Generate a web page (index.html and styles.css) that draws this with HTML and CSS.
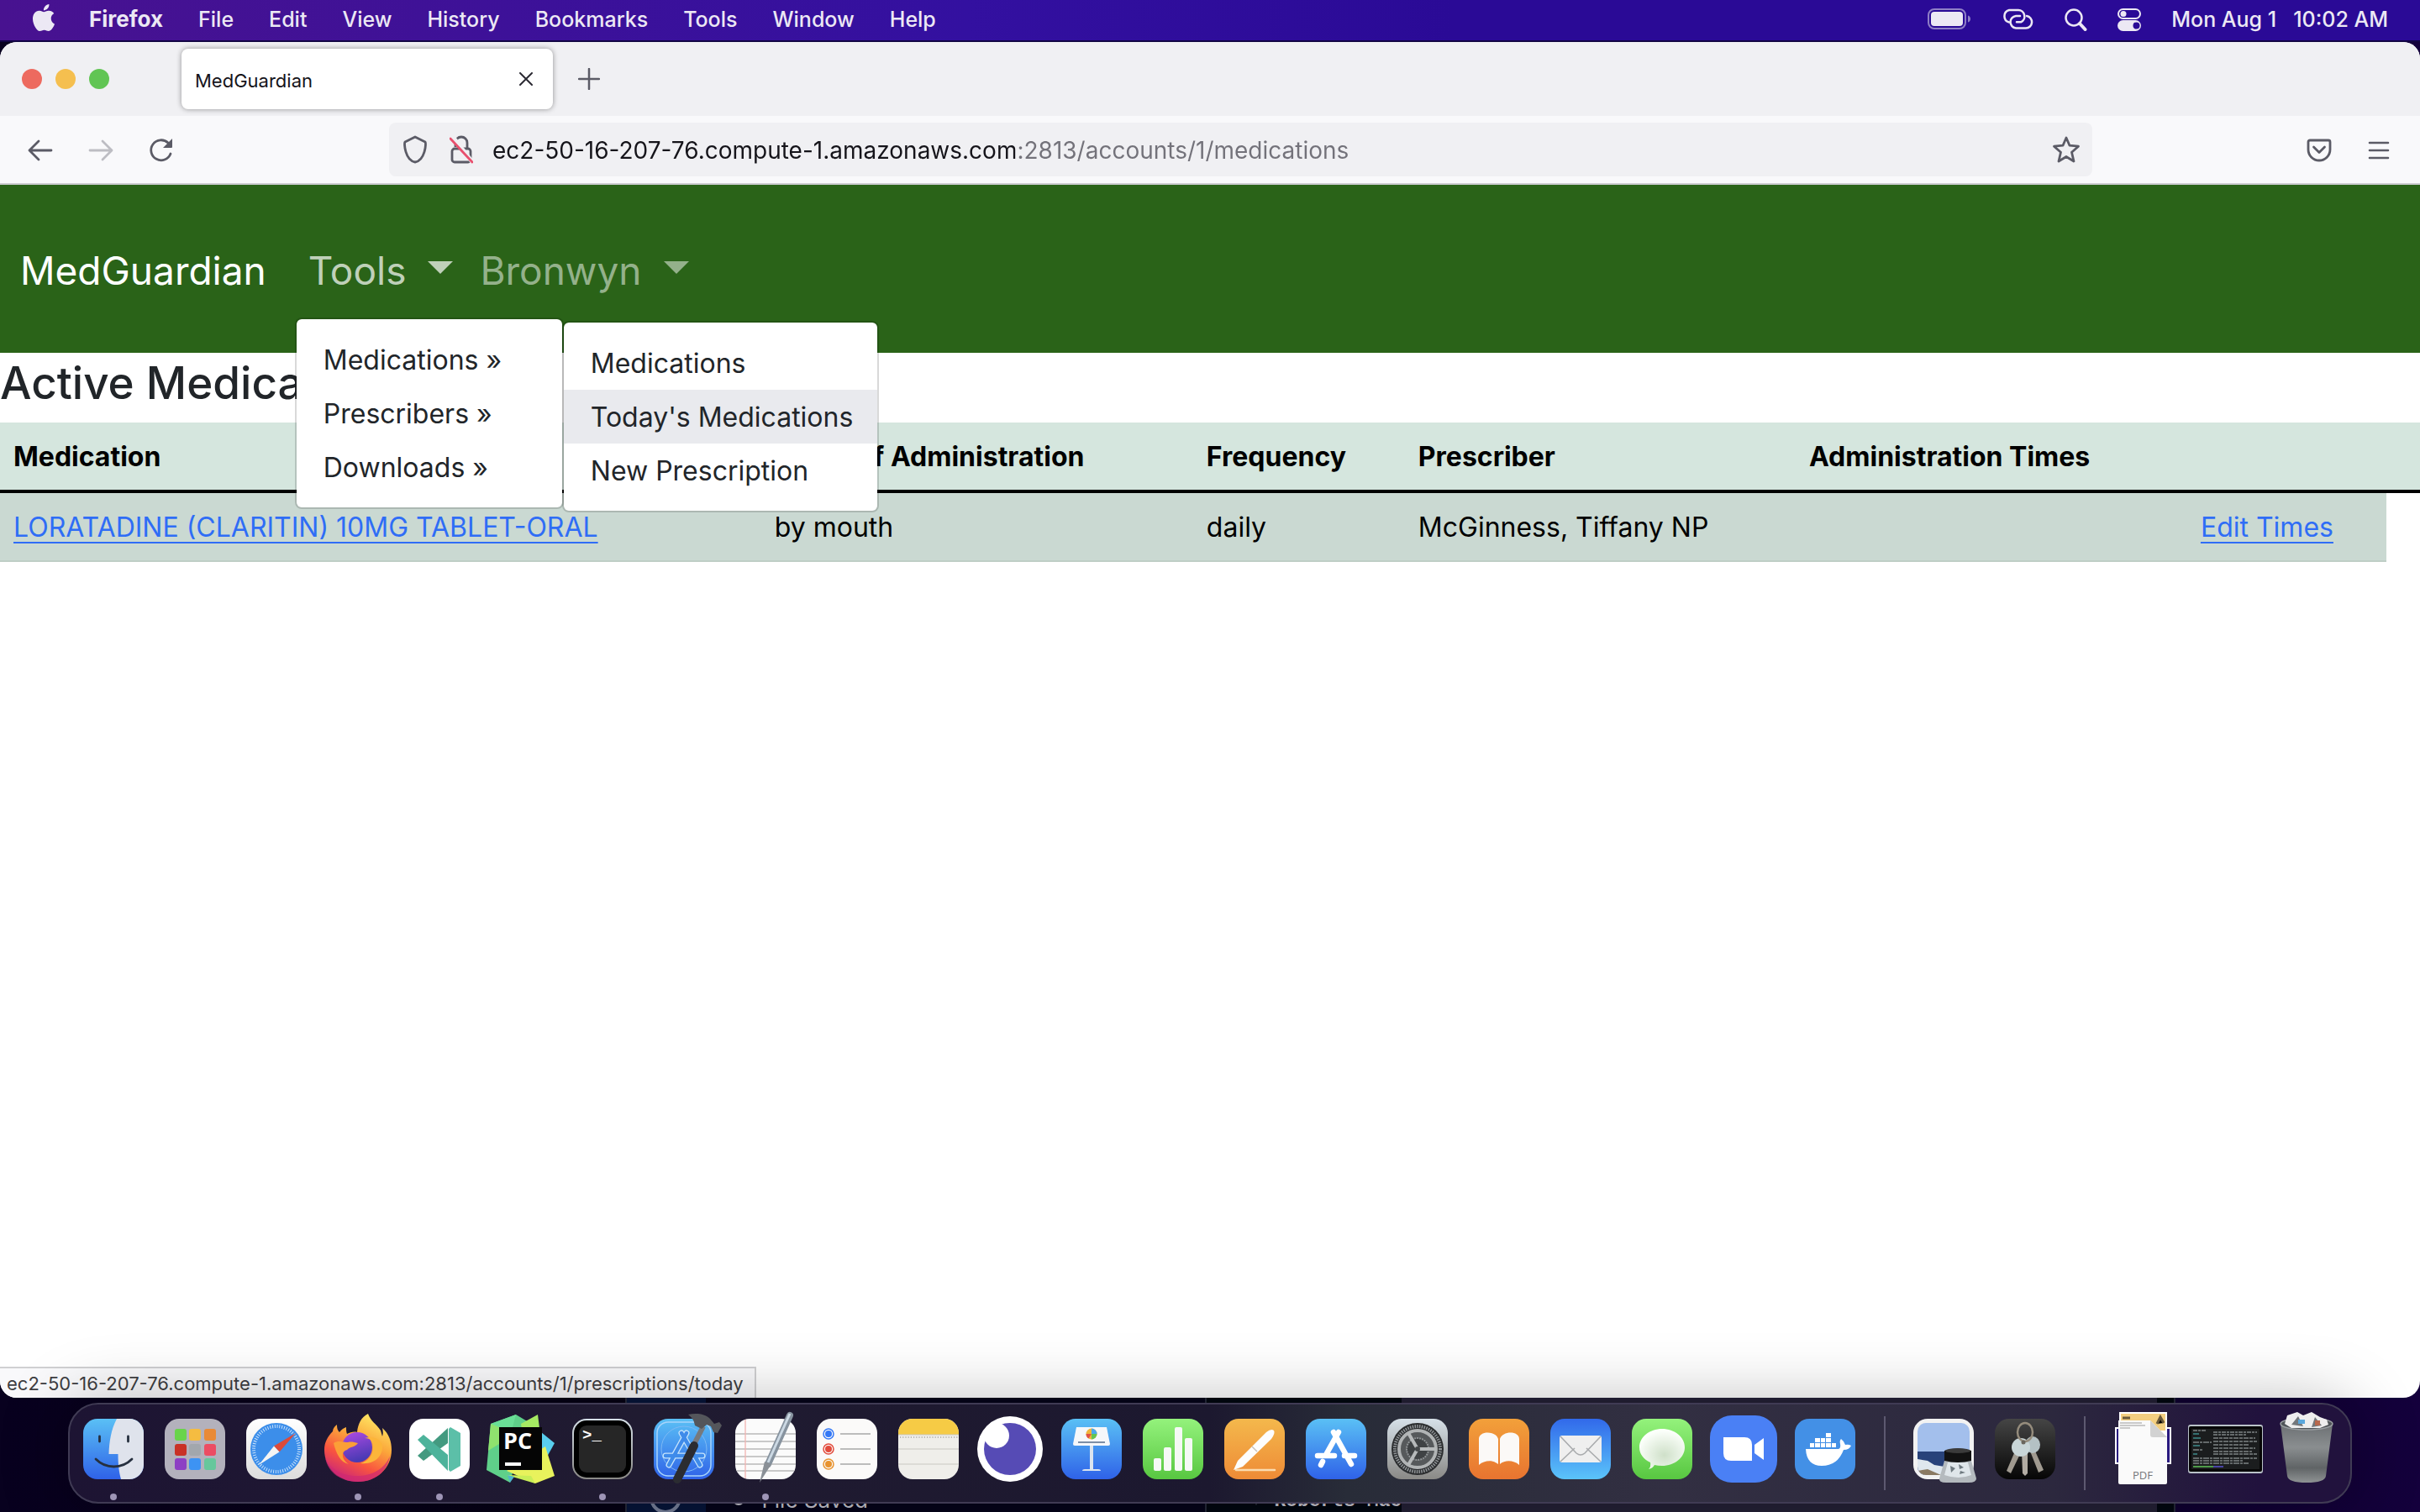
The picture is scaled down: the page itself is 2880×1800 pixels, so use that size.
FILE: index.html
```html
<!DOCTYPE html>
<html lang="en">
<head>
<meta charset="utf-8">
<title>MedGuardian</title>
<link rel="stylesheet" href="styles.css">
</head>
<body>
<div class="backdrop" aria-hidden="true">
  <div class="back-window editor">
    <div class="editor-rail"><svg viewBox="0 0 40 40" width="40" height="40"><circle cx="20" cy="20" r="17" fill="none" stroke="#77809a" stroke-width="4"/></svg></div>
    <div class="editor-body"><i class="bullet"></i><span>File Saved</span></div>
  </div>
  <div class="back-window shell">
    <div class="shell-pane"><i class="bullet dim"></i><span>Roberts-Mac</span></div>
    <div class="shell-side"></div>
  </div>
</div>

<header class="menubar">
  <svg class="apple" viewBox="0 0 24 24" width="32" height="32" fill="#ece8f4"><path d="M12.152 6.896c-.948 0-2.415-1.078-3.96-1.04-2.04.027-3.91 1.183-4.961 3.014-2.117 3.675-.546 9.103 1.519 12.09 1.013 1.454 2.208 3.09 3.792 3.039 1.52-.065 2.09-.987 3.935-.987 1.831 0 2.35.987 3.96.948 1.637-.026 2.676-1.48 3.676-2.948 1.156-1.688 1.636-3.325 1.662-3.415-.039-.013-3.182-1.221-3.22-4.857-.026-3.04 2.48-4.494 2.597-4.559-1.429-2.09-3.623-2.324-4.39-2.376-2-.156-3.675 1.09-4.61 1.09zM15.53 3.83c.843-1.012 1.4-2.427 1.245-3.83-1.207.052-2.662.805-3.532 1.818-.78.896-1.454 2.338-1.273 3.714 1.338.104 2.715-.688 3.559-1.701"/></svg>
  <nav class="menus">
    <button class="app-name">Firefox</button><button>File</button><button>Edit</button><button>View</button><button>History</button><button>Bookmarks</button><button>Tools</button><button>Window</button><button>Help</button>
  </nav>
  <div class="status">
    <svg viewBox="0 0 52 26" width="52" height="26"><rect x="1" y="1" width="44" height="23" rx="7" fill="none" stroke="#8f7fc6" stroke-width="2"/><rect x="4" y="4" width="38" height="17" rx="4" fill="#ece8f4"/><path d="M48 8.500c4 1 4 7 0 8z" fill="#8f7fc6"/></svg>
    <svg viewBox="0 0 38 26" width="38" height="26" fill="none" stroke="#ece8f4" stroke-width="2.500" stroke-linecap="round"><path d="M9 16.500A7.500 7.500 0 0 1 9 2h11a7.500 7.500 0 0 1 3 14.300h-5"/><path d="M22 9h-5a7.300 7.300 0 0 0 0 14.500h12A7.300 7.300 0 0 0 30 9"/></svg>
    <svg viewBox="0 0 28 28" width="28" height="28" fill="none" stroke="#ece8f4" stroke-linecap="round"><circle cx="12" cy="12" r="9.500" stroke-width="2.500"/><path d="M19 19l6.500 7" stroke-width="4"/></svg>
    <svg viewBox="0 0 28 28" width="28" height="28"><rect x="1" y="2" width="26" height="11" rx="5.500" fill="none" stroke="#ece8f4" stroke-width="2"/><circle cx="7" cy="7.500" r="3.500" fill="#ece8f4"/><rect y="15" width="28" height="13" rx="6.500" fill="#ece8f4"/><circle cx="22.500" cy="21.500" r="4" fill="#2a0a96"/></svg>
    <div class="clock"><span>Mon Aug 1</span><span>10:02 AM</span></div>
  </div>
</header>

<main class="window">
  <div class="tabstrip">
    <div class="lights"><button class="close" aria-label="Close"></button><button class="minimise" aria-label="Minimise"></button><button class="zoom" aria-label="Zoom"></button></div>
    <div class="tab"><span>MedGuardian</span><button aria-label="Close tab"><svg viewBox="0 0 16 16" width="16" height="16"><path d="M1 1l14 14M15 1L1 15" stroke="#2b2a33" stroke-width="2" stroke-linecap="round"/></svg></button></div>
    <button class="new-tab" aria-label="New tab"><svg viewBox="0 0 26 26" width="26" height="26"><path d="M13 1v24M1 13h24" stroke="#5b5b66" stroke-width="2.500" stroke-linecap="round"/></svg></button>
  </div>
  <div class="toolbar">
    <div class="history">
      <button aria-label="Back"><svg viewBox="0 0 30 26" width="30" height="26"><path d="M2 13h26M13 2L2 13l11 11" fill="none" stroke="#5b5b66" stroke-width="2.800" stroke-linecap="round" stroke-linejoin="round"/></svg></button>
      <button aria-label="Forward" disabled><svg viewBox="0 0 30 26" width="30" height="26"><path d="M28 13H2M17 2l11 11-11 11" fill="none" stroke="#bdbdc3" stroke-width="2.800" stroke-linecap="round" stroke-linejoin="round"/></svg></button>
      <button aria-label="Reload"><svg viewBox="0 0 30 30" width="30" height="30"><path d="M26 19a12 12 0 1 1-3-13l3 3" fill="none" stroke="#5b5b66" stroke-width="2.800" stroke-linecap="round"/><path d="M28 1v10a1 1 0 0 1-1 1H17z" fill="#5b5b66"/></svg></button>
    </div>
    <div class="urlbar">
      <svg viewBox="0 0 30 34" width="30" height="34"><path d="M15 2L3 8c-1.500 1 0 22 12 24C27 30 28.500 9 27 8z" fill="none" stroke="#5b5b66" stroke-width="2.800" stroke-linejoin="round"/></svg>
      <svg viewBox="0 0 28 34" width="28" height="34"><path d="M7 14V9a7 7 0 0 1 14 0v7" fill="none" stroke="#5b5b66" stroke-width="2.800"/><rect x="3" y="16" width="22" height="16" rx="3" fill="none" stroke="#5b5b66" stroke-width="2.800"/><path d="M4 2l24 31" stroke="#f0f0f3" stroke-width="5"/><path d="M1 4l26 28" stroke="#e8506e" stroke-width="2.800" stroke-linecap="round"/></svg>
      <input type="text" aria-label="Address" value="ec2-50-16-207-76.compute-1.amazonaws.com:2813/accounts/1/medications">
      <svg viewBox="0 0 34 34" width="34" height="34"><path d="M17 3l4 9.200 10.500 1-8 7L26 31l-9-5.500L8 31l2.500-10.800-8-7 10.500-1z" fill="none" stroke="#5b5b66" stroke-width="2.800" stroke-linejoin="round"/></svg>
    </div>
    <div class="actions">
      <button aria-label="Save to Pocket"><svg viewBox="0 0 30 28" width="30" height="28" fill="none" stroke="#5b5b66" stroke-width="2.800" stroke-linecap="round" stroke-linejoin="round"><path d="M4 2h22a2 2 0 0 1 2 2v9a13 13 0 0 1-26 0V4a2 2 0 0 1 2-2z"/><path d="M8.500 10l6.500 6.500 6.500-6.500"/></svg></button>
      <button aria-label="Menu"><svg viewBox="0 0 26 22" width="26" height="22"><path d="M2 2h22M2 11h22M2 20h22" stroke="#5b5b66" stroke-width="2.600" stroke-linecap="round"/></svg></button>
    </div>
  </div>

  <div class="page">
    <nav class="navbar">
      <a class="brand" href="#">MedGuardian</a>
      <div class="nav-item">
        <button class="nav-link open">Tools<i class="caret"></i></button>
        <ul class="dropdown">
          <li><a href="#">Medications »</a>
            <ul class="dropdown submenu">
              <li><a href="#">Medications</a></li>
              <li><a class="active" href="#">Today's Medications</a></li>
              <li><a href="#">New Prescription</a></li>
            </ul>
          </li>
          <li><a href="#">Prescribers »</a></li>
          <li><a href="#">Downloads »</a></li>
        </ul>
      </div>
      <div class="nav-item"><button class="nav-link">Bronwyn<i class="caret"></i></button></div>
    </nav>
    <h2>Active Medications</h2>
    <table>
      <colgroup><col class="c-name"><col class="c-route"><col class="c-freq"><col class="c-prescriber"><col class="c-times"><col class="c-edit"><col></colgroup>
      <thead><tr><th>Medication</th><th>Route of Administration</th><th>Frequency</th><th>Prescriber</th><th>Administration Times</th><th></th><th></th></tr></thead>
      <tbody><tr><td><a href="#">LORATADINE (CLARITIN) 10MG TABLET-ORAL</a></td><td>by mouth</td><td>daily</td><td>McGinness, Tiffany NP</td><td></td><td><a href="#">Edit Times</a></td></tr></tbody>
    </table>
  </div>
  <div class="link-status">ec2-50-16-207-76.compute-1.amazonaws.com:2813/accounts/1/prescriptions/today</div>
</main>

<footer class="dock">
  <svg class="defs" width="0" height="0"><defs>
    <linearGradient id="blue" x2="0" y2="1"><stop stop-color="#5ac0f5"/><stop offset="1" stop-color="#2f62e8"/></linearGradient>
    <linearGradient id="mailblue" x2="0" y2="1"><stop stop-color="#3169ea"/><stop offset="1" stop-color="#5bc4fa"/></linearGradient>
    <linearGradient id="green" x2="0" y2="1"><stop stop-color="#94f27c"/><stop offset="1" stop-color="#58c741"/></linearGradient>
    <linearGradient id="orange" x2="0" y2="1"><stop stop-color="#f4b84c"/><stop offset="1" stop-color="#ee8b36"/></linearGradient>
    <linearGradient id="book" x2="0" y2="1"><stop stop-color="#f2a03a"/><stop offset="1" stop-color="#e87430"/></linearGradient>
    <linearGradient id="white" x2="0" y2="1"><stop stop-color="#fff"/><stop offset="1" stop-color="#dcdcdc"/></linearGradient>
    <linearGradient id="steel" x2="0" y2="1"><stop stop-color="#d6e0e8"/><stop offset="1" stop-color="#8a8986"/></linearGradient>
    <linearGradient id="bin" x2="0" y2="1"><stop stop-color="#6c7073"/><stop offset=".4" stop-color="#8a8e90"/><stop offset=".75" stop-color="#606466"/><stop offset="1" stop-color="#8f9394"/></linearGradient>
    <linearGradient id="black" x2="0" y2="1"><stop stop-color="#454545"/><stop offset="1" stop-color="#060606"/></linearGradient>
    <linearGradient id="flame" x1=".8" y1="0" x2=".3" y2="1"><stop stop-color="#fff06a"/><stop offset=".4" stop-color="#fba63a"/><stop offset=".7" stop-color="#f9553f"/><stop offset="1" stop-color="#c8237c"/></linearGradient>
    <linearGradient id="globe" x2=".3" y2="1"><stop stop-color="#b04ae4"/><stop offset="1" stop-color="#4a3ab4"/></linearGradient>
    <radialGradient id="bubble" cx=".55" cy=".65" r=".6"><stop stop-color="#cfe0c9"/><stop offset="1" stop-color="#fbfffa"/></radialGradient>
  </defs></svg>

  <button class="slot running" aria-label="Finder"><svg viewBox="0 0 96 96"><clipPath id="fc"><rect x="12" y="12" width="72" height="72" rx="17"/></clipPath><g clip-path="url(#fc)"><rect x="12" y="12" width="72" height="72" fill="url(#blue)"/><path d="M52 12C45 25 43 40 42.500 54h11c0 12 1 21 3.500 30h30V12z" fill="#dfe3ec"/></g><path d="M31.500 33v6M65.500 33v6M27 60c12 12 31 12 43 0" fill="none" stroke="#26303f" stroke-width="2.800" stroke-linecap="round"/></svg></button>
  <button class="slot" aria-label="Launchpad"><svg viewBox="0 0 96 96"><rect x="12" y="12" width="72" height="72" rx="17" fill="#b3b1bc"/><g><rect x="24" y="24" width="14" height="14" rx="3" fill="#69d44b"/><rect x="41" y="24" width="14" height="14" rx="3" fill="#f5bc41"/><rect x="59" y="24" width="14" height="14" rx="3" fill="#e98a36"/><rect x="24" y="42" width="14" height="14" rx="3" fill="#c93126"/><rect x="41" y="42" width="14" height="14" rx="3" fill="#a2a7ad"/><rect x="59" y="42" width="14" height="14" rx="3" fill="#ec4c63"/><rect x="24" y="59" width="14" height="14" rx="3" fill="#8d3fc4"/><rect x="41" y="59" width="14" height="14" rx="3" fill="#3d93f3"/><rect x="59" y="59" width="14" height="14" rx="3" fill="#66c79c"/></g></svg></button>
  <button class="slot" aria-label="Safari"><svg viewBox="0 0 96 96"><rect x="12" y="12" width="72" height="72" rx="17" fill="url(#white)"/><circle cx="48" cy="48" r="31" fill="#3c8eea"/><circle cx="48" cy="48" r="27" fill="none" stroke="#c9e2fb" stroke-width="4" stroke-dasharray="1 1.830"/><path d="M71 29L45 44.500l6.500 7z" fill="#dc4a3a"/><path d="M27 67l18-22.500 6.500 7z" fill="#f4f4f4"/></svg></button>
  <button class="slot running" aria-label="Firefox"><svg viewBox="0 0 96 96"><path d="M60 6c3 9 10 12 15 20l2 7c1-3 1-6 0-10 8 7 11 16 11 26 0 22-18 38-40 38S8 71 8 49c0-9 4-16 10-22 0-3 2-6 5-8 0 5 1 7 3 9 2-3 5-5 8-6 0 3 0 6 1 8 4-2 8-3 12-2 1-10 5-18 13-22z" fill="url(#flame)"/><path d="M9 58c6 15 21 22 38 22s33-8 39-24c-3 20-19 31-38 31S12 77 9 58z" fill="#cf2a72" opacity=".7"/><circle cx="47" cy="46" r="18" fill="url(#globe)"/><path d="M19 41c5-4 12-1 17-1 4-1 8 0 12 1-3 5-10 4-13 8-8 2-6 12 2 17-10-2-15-13-18-25z" fill="#fb9f37"/><path d="M56 35c8 0 11 5 10 11 0 10-7 17-15 19 17 2 27-9 26-21-2-9-12-12-21-9z" fill="#fcb53a"/></svg></button>
  <button class="slot running" aria-label="Code"><svg viewBox="0 0 96 96"><rect x="12" y="12" width="72" height="72" rx="17" fill="#fff"/><path d="M22 56L58 23v18L29 62z" fill="#439a80"/><path d="M22 37l7-6 29 24v19z" fill="#4db39b"/><path d="M59 24l2-2 12 7v39l-12 7-2-2z" fill="#5cbfa8"/></svg></button>
  <button class="slot" aria-label="PyCharm"><svg viewBox="0 0 96 96"><path d="M12 18L42 7l20 12-20 42-7 27L7 73z" fill="#5fd08a"/><path d="M12 18L42 7l-8 30z" fill="#6adf97"/><path d="M12 18l10 4v20L9 50z" fill="#8fe26e"/><path d="M48 18L68 7l3 24-20 8z" fill="#a6ea63"/><path d="M72 28l16 13-10 18-14 5z" fill="#59ceee"/><path d="M31 74l46-29 11 35-23 9z" fill="#e8f25c"/><path d="M31 79l34 10-5-9z" fill="#c9ee58"/><path d="M35 88l5-7-8-2z" fill="#4fb6c9"/><rect x="22" y="22" width="51" height="51" fill="#050505"/><text x="27" y="48" class="pc">PC</text><rect x="29" y="64" width="19" height="4" fill="#fff"/></svg></button>
  <button class="slot running" aria-label="Terminal"><svg viewBox="0 0 96 96"><rect x="12" y="12" width="72" height="72" rx="17" fill="url(#steel)"/><rect x="14" y="14" width="68" height="68" rx="15" fill="#000"/><rect x="20" y="20" width="56" height="56" rx="9" fill="#262626"/><text x="24" y="37" class="prompt">&gt;_</text></svg></button>
  <button class="slot" aria-label="Xcode"><svg viewBox="0 0 96 96"><rect x="12" y="12" width="72" height="72" rx="17" fill="url(#blue)"/><rect x="16" y="16" width="64" height="64" rx="13" fill="none" stroke="#a8d4fa" stroke-width="1.500"/><circle cx="48" cy="48" r="27" fill="none" stroke="#7db9f4"/><g fill="none" stroke="#c6e4fc" stroke-width="7" stroke-linecap="round"><path d="M51 29L30 67M45 29l22 38M26 56h44"/></g><g fill="none" stroke="#3f8bea" stroke-width="4.500" stroke-linecap="round"><path d="M51 29L30 67M45 29l22 38M26 56h44"/></g><path d="M71 21L56 50" stroke="#77797d" stroke-width="6"/><path d="M60 44L40 84" stroke="#2b2c31" stroke-width="10" stroke-linecap="round"/><path d="M53 7c10-2 20-1 26 5l5 6 6-2 3 4-5 9-5-1-3-7-5-2-6 5-8-4c-1-6-3-9-8-13z" fill="#54565b"/></svg></button>
  <button class="slot running" aria-label="TextEdit"><svg viewBox="0 0 96 96"><rect x="12" y="12" width="72" height="72" rx="17" fill="#fbfbfb"/><path d="M12 30h72M12 39h72M12 48h72M12 57h72M12 66h72M14 74h68" stroke="#b9b9b9" stroke-width="1.300"/><path d="M24 13v70" stroke="#f2b3b0" stroke-width="1.300"/><path d="M77 8L51 66" stroke="#87939f" stroke-width="8" stroke-linecap="round"/><path d="M77 6L51 64" stroke="#ccd9e4" stroke-width="3"/><path d="M47 63l8 3-14 22z" fill="#8a9097"/></svg></button>
  <button class="slot" aria-label="Reminders"><svg viewBox="0 0 96 96"><rect x="12" y="12" width="72" height="72" rx="17" fill="#fbfaf9"/><path d="M40 30h36M40 48h36M40 66h36" stroke="#bcbcbc" stroke-width="1.800"/><g fill="none" stroke-width="1.500"><circle cx="26" cy="30" r="6" stroke="#3478f6"/><circle cx="26" cy="48" r="6" stroke="#e24b3c"/><circle cx="26" cy="66" r="6" stroke="#e8932f"/></g><circle cx="26" cy="30" r="4" fill="#3478f6"/><circle cx="26" cy="48" r="4" fill="#e24b3c"/><circle cx="26" cy="66" r="4" fill="#e8932f"/></svg></button>
  <button class="slot" aria-label="Notes"><svg viewBox="0 0 96 96"><clipPath id="nc"><rect x="12" y="12" width="72" height="72" rx="17"/></clipPath><g clip-path="url(#nc)"><rect x="12" y="12" width="72" height="72" fill="#efeeea"/><rect x="12" y="12" width="72" height="19" fill="#f6cb45"/><path d="M12 31h72M12 48h72M12 66h72" stroke="#c9c7c1" stroke-width="1.200"/><path d="M14 34h70" stroke="#a9a7a2" stroke-width="1.500" stroke-dasharray="1.200 2"/></g></svg></button>
  <button class="slot" aria-label="Insomnia"><svg viewBox="0 0 96 96"><circle cx="48" cy="48" r="39" fill="#fff"/><circle cx="48" cy="48" r="31" fill="#564bb5"/><circle cx="32" cy="32" r="15" fill="#fff"/></svg></button>
  <button class="slot" aria-label="Keynote"><svg viewBox="0 0 96 96"><rect x="12" y="12" width="72" height="72" rx="17" fill="url(#blue)"/><path d="M46 42h4v30h6q3 0 3 2H37q0-2 3-2h6z" fill="#dbe4ef"/><path d="M30 22h36l4 20q0 2-2 2H28q-2 0-2-2z" fill="#f5f7fa"/><path d="M32 40h32" stroke="#7d8fa6" stroke-width="2"/><circle cx="48" cy="30" r="6.500" fill="#f0b53c"/><path d="M48 30v-6.500a6.500 6.500 0 0 1 6.500 6.500z" fill="#4aa8ec"/><path d="M48 30h6.500a6.500 6.500 0 0 1-6.500 6.500z" fill="#62c454"/><path d="M48 30l-6.500 0a6.500 6.500 0 0 0 3 5.500z" fill="#e05246"/></svg></button>
  <button class="slot" aria-label="Numbers"><svg viewBox="0 0 96 96"><rect x="12" y="12" width="72" height="72" rx="17" fill="url(#green)"/><g fill="#f5f9f5"><rect x="25" y="59" width="9" height="15" rx="2"/><rect x="37" y="46" width="9" height="28" rx="2"/><rect x="50" y="22" width="9" height="52" rx="2"/><rect x="62" y="35" width="9" height="39" rx="2"/></g></svg></button>
  <button class="slot" aria-label="Pages"><svg viewBox="0 0 96 96"><rect x="12" y="12" width="72" height="72" rx="17" fill="url(#orange)"/><path d="M26 73h46" stroke="#fbdcb0" stroke-width="2.500" stroke-linecap="round"/><path d="M71 26q2 3-3 10L34 69l-11 4 5-11 34-34q6-5 9-2z" fill="#fdfdfd"/><path d="M45 45l6 6" stroke="#c8c2bb" stroke-width="1.500"/></svg></button>
  <button class="slot" aria-label="App Store"><svg viewBox="0 0 96 96"><rect x="12" y="12" width="72" height="72" rx="17" fill="url(#blue)"/><g stroke="#fff" stroke-width="6.500" stroke-linecap="round"><path d="M51 28L37 53M32 63l-2 4M45 28l21 38M26 56h20M58 56h12"/></g></svg></button>
  <button class="slot" aria-label="System Preferences"><svg viewBox="0 0 96 96"><rect x="12" y="12" width="72" height="72" rx="17" fill="url(#steel)"/><circle cx="48" cy="48" r="31" fill="#2b2d2f"/><circle cx="48" cy="48" r="27" fill="none" stroke="#8f9396" stroke-width="4" stroke-dasharray="1.500 1.300"/><circle cx="48" cy="48" r="22" fill="#56595b" stroke="#b0b3b4" stroke-width="4"/><circle cx="48" cy="48" r="13" fill="#3f4244" stroke="#909496" stroke-width="2" stroke-dasharray="2 1"/><path d="M48 48h22M48 48L37 29M48 48L37 67" stroke="#b6b9ba" stroke-width="4"/><circle cx="48" cy="48" r="3" fill="#45484a"/></svg></button>
  <button class="slot" aria-label="Books"><svg viewBox="0 0 96 96"><rect x="12" y="12" width="72" height="72" rx="17" fill="url(#book)"/><path d="M47 66c-6-5-16-5-23 1V36c0-10 20-10 23 0zM49 66c6-5 16-5 23 1V36c0-10-20-10-23 0z" fill="#fbf9f7"/></svg></button>
  <button class="slot" aria-label="Mail"><svg viewBox="0 0 96 96"><rect x="12" y="12" width="72" height="72" rx="17" fill="url(#mailblue)"/><rect x="23" y="32" width="50" height="32" rx="3" fill="#efefef"/><path d="M24 63l17-16M72 63L55 47M24 33l19 20q5 4 10 0l19-20" fill="none" stroke="#a9abad" stroke-width="1.600"/></svg></button>
  <button class="slot" aria-label="Messages"><svg viewBox="0 0 96 96"><rect x="12" y="12" width="72" height="72" rx="17" fill="url(#green)"/><path d="M48 24c15 0 27 10 27 22S63 68 48 68q-5 0-9-1-2 4-7 5 3-3 2-8c-8-4-13-10-13-18 0-12 12-22 27-22z" fill="url(#bubble)"/></svg></button>
  <button class="slot" aria-label="Zoom"><svg viewBox="0 0 96 96"><rect x="8" y="8" width="80" height="80" rx="26" fill="#4a80f5"/><path d="M24 34h25q9 0 9 9v19H33q-9 0-9-9z" fill="#fff"/><path d="M61 43l11-8v26l-11-8z" fill="#fff"/></svg></button>
  <button class="slot" aria-label="Docker"><svg viewBox="0 0 96 96"><rect x="12" y="12" width="72" height="72" rx="17" fill="#4390e6"/><path d="M25 48h39q3-1 2-6-1-4 1-6 4 3 5 7 4-1 7 1-2 5-9 5-7 19-26 19Q26 68 25 48z" fill="#fff"/><g fill="#fff"><rect x="30" y="41" width="5" height="5"/><rect x="36" y="41" width="6" height="5"/><rect x="43" y="41" width="5" height="5"/><rect x="49" y="41" width="6" height="5"/><rect x="56" y="41" width="5" height="5"/><rect x="36" y="35" width="6" height="5"/><rect x="43" y="35" width="5" height="5"/><rect x="49" y="35" width="6" height="5"/><rect x="49" y="29" width="6" height="5"/></g></svg></button>
  <i class="divider"></i>
  <button class="slot" aria-label="Preview"><svg viewBox="0 0 96 96"><clipPath id="pc"><rect x="17" y="17" width="62" height="62" rx="10"/></clipPath><rect x="12" y="12" width="72" height="72" rx="17" fill="#f2f2f2"/><g clip-path="url(#pc)"><rect x="17" y="17" width="62" height="62" fill="#a3bfec"/><rect x="17" y="51" width="62" height="28" fill="#28427a"/><path d="M17 60l12 2 8 5 12 2v10H17z" fill="#dfe7ee"/><path d="M17 74l12-2 16 7H17z" fill="#8a7a62"/></g><path d="M49 62h32l6 21q0 5-9 5H51q-9 0-8-5z" fill="#b4babe"/><path d="M53 64h24l4 15q-15 6-32 0z" fill="#dfe6ea"/><path d="M56 68l6 3-5 5zM66 66l6 4-5 2zM68 74l6 2-7 2z" fill="#6f7a80"/><path d="M49 50q16-5 32 0v12q-16 4-32 0z" fill="#121212"/><ellipse cx="65" cy="50" rx="15" ry="3" fill="#3b3b3b"/></svg></button>
  <button class="slot" aria-label="Keychain Access"><svg viewBox="0 0 96 96"><rect x="12" y="12" width="72" height="72" rx="17" fill="url(#black)"/><path d="M58 46l12 27-6 3-11-28zM38 46L26 74l5 3 12-25z" fill="#a09a90"/><ellipse cx="57" cy="43" rx="9" ry="10" fill="#b4c1c4"/><path d="M44 50h7v27l-3 3-3-3z" fill="#b2aca3"/><ellipse cx="43" cy="46" rx="11" ry="11" fill="#c9d6d8"/><ellipse cx="48" cy="28" rx="9" ry="11" fill="none" stroke="#958c7c" stroke-width="2.500"/><circle cx="46" cy="40" r="2.500" fill="#6a665e"/></svg></button>
  <i class="divider"></i>
  <button class="slot" aria-label="Downloads"><svg viewBox="0 0 96 96"><rect x="14" y="22" width="67" height="44" fill="#fff"/><rect x="16" y="24" width="63" height="40" fill="#2a1a80"/><rect x="19" y="4" width="57" height="30" fill="#fff"/><rect x="21" y="6" width="53" height="20" fill="#f3cf80"/><path d="M23 11h9M64 18l4-8 4 7" stroke="#6a5a3a" stroke-width="3"/><path d="M18 14h38l20 20v54q0 2-2 2H20q-2 0-2-2z" fill="#fafafa"/><path d="M56 14v17q0 3 3 3h17z" fill="#d2d2d2"/><path d="M20 17h26M20 20h30M20 23h12" stroke="#9a9a9a" stroke-width="1"/><text x="47" y="84" class="pdf">PDF</text></svg></button>
  <button class="slot" aria-label="Terminal window"><svg viewBox="0 0 96 96"><rect x="4" y="19" width="89" height="58" rx="3" fill="#b9c2c8"/><rect x="5" y="21" width="87" height="54" rx="2" fill="#060606"/><rect x="8" y="24" width="81" height="48" fill="#1b1d1e"/><g stroke="#7d8284" stroke-width="1.300"><path d="M10 26h16M34 28h52M34 31h40" stroke-dasharray="5 1 3 1"/><path d="M34 35h50M34 39h52M34 43h42M34 47h50M34 51h46M34 54h52" stroke-dasharray="6 1 4 1"/><path d="M10 40h22M10 49h12M10 59h76M10 62h60M10 65h66" stroke-dasharray="7 1 3 1"/></g><path d="M10 30h7M10 35h9M10 44h8M10 54h5" stroke="#3f8b8b" stroke-width="1.300"/><path d="M10 69h24" stroke="#4f9b4a" stroke-width="2"/><path d="M34 69h12" stroke="#4a45a6" stroke-width="2"/></svg></button>
  <button class="slot" aria-label="Bin"><svg viewBox="0 0 96 96"><path d="M17 18h62l-8 62q-1 8-23 8t-23-8z" fill="url(#bin)"/><ellipse cx="48" cy="18" rx="31" ry="7" fill="#4f5458" stroke="#9a9fa2" stroke-width="1.500"/><path d="M22 18l3-10 12-4 7 4 10-4 10 6 8 3 2 6-10 4H30z" fill="#eee"/><path d="M30 19l8-10 6 12zM54 22l4-12 8 10z" fill="#73787c"/><path d="M38 13h8v5h-8z" fill="#5aa7dc"/><path d="M58 14h6v6h-6z" fill="#b7694e"/></svg></button>
</footer>
</body>
</html>
```
FILE: styles.css
```css
* { box-sizing: border-box; }

body {
  margin: 0;
  min-height: 100vh;
  display: flex;
  flex-direction: column;
  font-family: Inter, "Liberation Sans", sans-serif;
  color: #212529;
  background: linear-gradient(90deg, #08011f, #050214 25%, #0a0226 80%, #14003c);
  position: relative;
  overflow: hidden;
}

button {
  border: 0;
  padding: 0;
  background: none;
  font: inherit;
  color: inherit;
  display: block;
}

svg { display: block; flex: none; }

/* windows showing past the bottom edge of the browser */
.backdrop { position: absolute; inset: auto 0 0 0; height: 140px; }

.back-window {
  position: absolute;
  top: 0;
  bottom: 0;
  display: flex;
  overflow: hidden;
  font-size: 26px;
  line-height: 32px;
  color: #c6c4ce;
  border-left: 2px solid #262a3a;
}

.editor { left: 25.850%; width: 24%; background: #05041a; }
.editor-rail { width: 94px; background: #06153a; padding: 103px 0 0 26px; }
.editor-body, .shell-pane { display: flex; gap: 20px; padding-top: 110px; }
.editor-body { padding-left: 32px; }
.bullet { width: 14px; height: 14px; margin-top: 8px; border-radius: 50%; background: #c6c4ce; }
.bullet.dim { background: #3d4450; }
.shell { left: 49.800%; width: 40.100%; background: #020711; border-right: 2px solid #262a3a; }
.shell-pane { width: 232px; padding-left: 58px; white-space: nowrap; overflow: hidden; font: 700 23px/34px "Liberation Mono", monospace; }
.shell-side { flex: 1; background: #242136; margin-right: 20px; }

/* menu bar */
.menubar {
  height: 50px;
  display: flex;
  align-items: center;
  padding: 0 38px 2px 36px;
  font-size: 25px;
  line-height: 32px;
  font-weight: 500;
  color: #ece8f4;
  background: linear-gradient(90deg, #481290, #3310a0 40%, #2a0a96 60%, #2a0a96);
  border-bottom: 2px solid #120544;
  position: relative;
}

.apple { margin-right: 38px; margin-bottom: 4px; }
.menus { display: flex; gap: 42px; }
.app-name { font-size: 26px; font-weight: 700; }
.status { margin-left: auto; display: flex; align-items: center; gap: 36px; }
.clock { display: flex; gap: 20px; }

/* browser window */
.window {
  flex: 1;
  display: flex;
  flex-direction: column;
  background: #fff;
  border-radius: 20px;
  overflow: hidden;
  position: relative;
}

.tabstrip { display: flex; align-items: center; height: 88px; background: #f0f0f3; padding-left: 26px; }
.lights { display: flex; gap: 16px; margin-right: 86px; }
.lights button { width: 24px; height: 24px; border-radius: 50%; }
.close { background: #ed6a5f; }
.minimise { background: #f5bf4f; }
.zoom { background: #61c554; }

.tab {
  width: 442px;
  height: 72px;
  border-radius: 8px;
  background: #fff;
  box-shadow: 0 0 6px rgba(0, 0, 0, .4);
  display: flex;
  align-items: center;
  justify-content: space-between;
  padding: 0 24px 0 16px;
  font-size: 22px;
  line-height: 28px;
  color: #15141a;
}

.tab span { padding-top: 3px; }
.new-tab { margin-left: 30px; }

.toolbar {
  display: flex;
  align-items: center;
  height: 82px;
  padding: 2px 36px 0 33px;
  background: #f9f9fb;
  border-bottom: 2px solid #ccccd0;
}

.history { display: flex; align-items: center; gap: 42px; width: 430px; }

.urlbar {
  flex: 1;
  height: 64px;
  margin-top: -2px;
  border-radius: 8px;
  background: #f0f0f3;
  display: flex;
  align-items: center;
  gap: 26px;
  padding: 0 14px 0 16px;
}

.urlbar input {
  flex: 1;
  margin-left: -3px;
  border: 0;
  padding: 2px 0 0;
  height: 40px;
  font: 28px Inter, "Liberation Sans", sans-serif;
  color: transparent;
  background: linear-gradient(90deg, #15141a 622px, #73727a 622px);
  background-clip: text;
}

.actions { display: flex; align-items: center; justify-content: space-between; width: 354px; padding-left: 255px; }

/* web page */
.page { flex: 1; font-size: 32px; line-height: 48px; }

.navbar { display: flex; align-items: center; height: 200px; padding: 4px 0 0 24px; background: #2a6318; font-size: 46px; line-height: 72px; }
.brand { color: #fff; text-decoration: none; margin-right: 34px; }
.nav-item { position: relative; }
.nav-link { display: flex; align-items: center; gap: 26px; padding: 0 16px; color: #94b18b; }
.nav-link.open { color: #bfd0b9; }
.caret { border: 15px solid transparent; border-top-color: currentColor; border-bottom: 0; margin-bottom: 8px; }

.dropdown {
  position: absolute;
  top: 92px;
  left: 0;
  z-index: 2;
  width: 320px;
  margin: 0;
  padding: 16px 0;
  list-style: none;
  font-size: 32px;
  line-height: 48px;
  background: #fff;
  background-clip: padding-box;
  border: 2px solid rgba(0, 0, 0, .15);
  border-radius: 8px;
}

.dropdown li { position: relative; }
.dropdown a { display: block; padding: 9px 32px 7px; color: #212529; text-decoration: none; white-space: nowrap; }
.dropdown .active { background: #e9eaee; }
.submenu { top: -14px; left: 100%; width: 377px; }

h2 { margin: 0; padding: 3px 0 13px; font-size: 53px; line-height: 67px; font-weight: 500; }

table { width: 100%; table-layout: fixed; border-spacing: 0; color: #000; }
.c-name { width: 31.450%; }
.c-route { width: 17.850%; }
.c-freq { width: 8.750%; }
.c-prescriber { width: 16.150%; }
.c-times { width: 16.180%; }
.c-edit { width: 8.230%; }
th, td { padding: 17px 16px 15px; text-align: left; white-space: nowrap; height: 80px; }
th { background: #d5e6de; border-bottom: 4px solid #000; font-weight: 700; }
td { background: #cad9d2; border-bottom: 2px solid #bfcec6; }
td a { color: #2f6df6; text-underline-offset: 6px; text-decoration-thickness: 2px; }

.link-status {
  align-self: flex-start;
  padding: 0 13px 0 8px;
  height: 37px;
  line-height: 36px;
  font-size: 22px;
  color: #3e3e42;
  background: #f9f9fb;
  border-top: 2px solid #d0d0d2;
  border-right: 2px solid #d0d0d2;
}

/* dock */
.dock {
  position: relative;
  display: flex;
  height: 120px;
  margin: 6px 81px 10px;
  padding: 5px 3px 0;
  border: 2px solid #403b54;
  border-radius: 36px;
  background: linear-gradient(90deg, #1d1433, #201b31 25%, #1c182f 50%, #282c38 56%, #322f42 70%, #2c283e 87%, #21123d 96%);
  box-shadow: 0 0 80px rgba(0, 0, 0, .28);
}

.defs { position: absolute; }
.slot { flex: 1; display: flex; flex-direction: column; align-items: center; }
.slot svg { width: 96px; height: 96px; }
.running::after { content: ""; width: 8px; height: 8px; margin-top: 5px; border-radius: 50%; background: #9e95b6; }
.divider { flex: none; width: 2px; height: 88px; margin: 9px 21px 0; background: #5d5970; }

.pc { font: 700 27px "Open Sans", sans-serif; fill: #fff; }
.prompt { font: 700 19px "Liberation Mono", monospace; fill: #fff; }
.pdf { font: 13px "Open Sans", sans-serif; fill: #77777a; text-anchor: middle; }
```
